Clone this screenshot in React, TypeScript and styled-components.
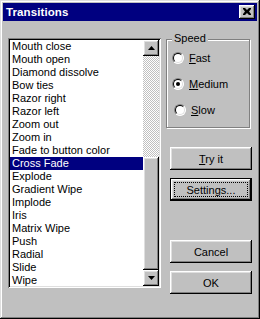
import React from "react";
import styled, { createGlobalStyle, css } from "styled-components";

const Global = createGlobalStyle`
  html, body { margin: 0; padding: 0; background: #c0c0c0; }
  body { font-family: "Liberation Sans", Arial, sans-serif; font-size: 11px; }
  * { box-sizing: border-box; }
`;

const raised = css`
  box-shadow: inset -1px -1px #000, inset 1px 1px #fff, inset -2px -2px #808080,
    inset 2px 2px #dfdfdf;
`;

const Window = styled.div`
  width: 260px;
  height: 319px;
  background: #c0c0c0;
  padding: 3px;
  box-shadow: inset -1px -1px #000, inset 1px 1px #dfdfdf, inset -2px -2px #808080,
    inset 2px 2px #fff;
  display: flex;
  flex-direction: column;
`;

const TitleBar = styled.div`
  height: 18px;
  background: #000080;
  display: flex;
  align-items: center;
  justify-content: space-between;
  padding: 0 2px 0 3px;
`;

const TitleText = styled.span`
  color: #fff;
  font-weight: bold;
  font-size: 11.5px;
  letter-spacing: 0.1px;
`;

const CloseButton = styled.div`
  width: 16px;
  height: 14px;
  background: #c0c0c0;
  ${raised};
  display: flex;
  align-items: center;
  justify-content: center;
  padding-bottom: 1px;
  padding-right: 1px;
`;

const Body = styled.div`
  display: flex;
  padding: 17px 4px 0 5px;
  gap: 4px;
`;

const ListBox = styled.div`
  width: 153px;
  height: 250px;
  padding: 2px;
  background: #fff;
  box-shadow: inset 1px 1px #808080, inset -1px -1px #fff, inset 2px 2px #000,
    inset -2px -2px #dfdfdf;
  display: flex;
`;

const Items = styled.div`
  flex: 1;
  overflow: hidden;
  display: flex;
  flex-direction: column;
`;

const Item = styled.div<{ $selected?: boolean }>`
  height: 13px;
  flex: none;
  line-height: 13px;
  padding-left: 2px;
  white-space: nowrap;
  color: ${(p) => (p.$selected ? "#fff" : "#000")};
  background: ${(p) => (p.$selected ? "#000080" : "transparent")};
`;

const ScrollBar = styled.div`
  width: 16px;
  display: flex;
  flex-direction: column;
`;

const ScrollButton = styled.div`
  width: 16px;
  height: 16px;
  flex: none;
  background: #c0c0c0;
  ${raised};
  display: flex;
  align-items: center;
  justify-content: center;
`;

const Track = styled.div`
  flex: 1;
  background-color: #c0c0c0;
  background-image: repeating-conic-gradient(#c0c0c0 0 25%, #fff 0 50%);
  background-size: 2px 2px;
`;

const Thumb = styled.div`
  height: 113px;
  flex: none;
  background: #c0c0c0;
  ${raised};
`;

const RightCol = styled.div`
  width: 88px;
  display: flex;
  flex-direction: column;
`;

const GroupBox = styled.div`
  position: relative;
  margin: 1px 0 0 1px;
  width: 84px;
  height: 89px;
  border: 1px solid #808080;
  box-shadow: inset 1px 1px #fff, 1px 1px #fff;
  padding: 12px 0 0 5px;
  display: flex;
  flex-direction: column;
  gap: 14px;
`;

const Legend = styled.span`
  position: absolute;
  top: -8px;
  left: 5px;
  padding: 0 2px;
  line-height: 13px;
  background: #c0c0c0;
  color: #000;
`;

const RadioRow = styled.div<{ $shift?: number }>`
  height: 12px;
  display: flex;
  align-items: center;
  gap: 5px;
  margin-left: ${(p) => p.$shift ?? 0}px;
  color: #000;
`;

const RadioCircle = styled.span<{ $checked?: boolean }>`
  position: relative;
  width: 12px;
  height: 12px;
  flex: none;
  border-radius: 50%;
  background: #fff;
  border: 1px solid;
  border-color: #808080 #fff #fff #808080;
  display: flex;
  align-items: center;
  justify-content: center;
  &::before {
    content: "";
    width: 10px;
    height: 10px;
    border-radius: 50%;
    border: 1px solid;
    border-color: #000 #dfdfdf #dfdfdf #000;
    box-sizing: border-box;
    display: flex;
  }
  &::after {
    content: "";
    position: absolute;
    left: 3px;
    top: 3px;
    width: 4px;
    height: 4px;
    border-radius: 50%;
    background: ${(p) => (p.$checked ? "#000" : "transparent")};
  }
`;

const RadioLabel = styled.span`
  line-height: 13px;
`;

const Button = styled.div<{ $mt: number; $default?: boolean }>`
  position: relative;
  margin: ${(p) => p.$mt}px 0 0 5px;
  width: 82px;
  height: 23px;
  background: #c0c0c0;
  display: flex;
  align-items: center;
  justify-content: center;
  color: #000;
  ${(p) =>
    p.$default
      ? css`
          box-shadow: inset 0 0 0 1px #000, inset -2px -2px #000, inset 2px 2px #fff,
            inset -3px -3px #808080, inset 3px 3px #dfdfdf;
          &::after {
            content: "";
            position: absolute;
            inset: 4px;
            border: 1px dotted #000;
          }
        `
      : raised};
`;

const U = styled.span`
  text-decoration: underline;
`;

const items = [
  "Mouth close",
  "Mouth open",
  "Diamond dissolve",
  "Bow ties",
  "Razor right",
  "Razor left",
  "Zoom out",
  "Zoom in",
  "Fade to button color",
  "Cross Fade",
  "Explode",
  "Gradient Wipe",
  "Implode",
  "Iris",
  "Matrix Wipe",
  "Push",
  "Radial",
  "Slide",
  "Wipe",
];

const Arrow = ({ up }: { up?: boolean }) => (
  <svg width="7" height="4" viewBox="0 0 7 4">
    {up ? <polygon points="3.5,0 7,4 0,4" fill="#000" /> : <polygon points="0,0 7,0 3.5,4" fill="#000" />}
  </svg>
);

export default function App() {
  return (
    <>
      <Global />
      <Window>
        <TitleBar>
          <TitleText>Transitions</TitleText>
          <CloseButton>
            <svg width="8" height="7" viewBox="0 0 8 7">
              <path d="M0 0h2l2 2 2-2h2v1L6 3.5 8 6v1H6L4 5 2 7H0V6l2-2.5L0 1z" fill="#000" />
            </svg>
          </CloseButton>
        </TitleBar>
        <Body>
          <ListBox>
            <Items>
              {items.map((t) => (
                <Item key={t} $selected={t === "Cross Fade"}>
                  {t}
                </Item>
              ))}
            </Items>
            <ScrollBar>
              <ScrollButton>
                <Arrow up />
              </ScrollButton>
              <Track />
              <Thumb />
              <ScrollButton>
                <Arrow />
              </ScrollButton>
            </ScrollBar>
          </ListBox>
          <RightCol>
            <GroupBox>
              <Legend>Speed</Legend>
              <RadioRow>
                <RadioCircle />
                <RadioLabel>
                  <U>F</U>ast
                </RadioLabel>
              </RadioRow>
              <RadioRow>
                <RadioCircle $checked />
                <RadioLabel>
                  <U>M</U>edium
                </RadioLabel>
              </RadioRow>
              <RadioRow $shift={2}>
                <RadioCircle />
                <RadioLabel>
                  <U>S</U>low
                </RadioLabel>
              </RadioRow>
            </GroupBox>
            <Button $mt={19}>
              <span>
                <U>T</U>ry it
              </span>
            </Button>
            <Button $mt={8} $default>
              Settings...
            </Button>
            <Button $mt={39}>Cancel</Button>
            <Button $mt={8}>OK</Button>
          </RightCol>
        </Body>
      </Window>
    </>
  );
}
